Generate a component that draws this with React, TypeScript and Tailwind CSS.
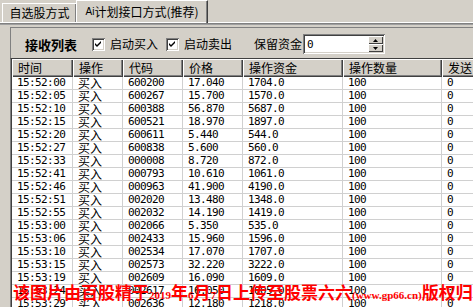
import React from "react";

const rows: [string, string, string, string, string][] = [
  ["15:52:00", "600200", "17.040", "1704.0", "100"],
  ["15:52:05", "600267", "15.700", "1570.0", "100"],
  ["15:52:10", "600388", "56.870", "5687.0", "100"],
  ["15:52:15", "600521", "18.970", "1897.0", "100"],
  ["15:52:20", "600611", "5.440", "544.0", "100"],
  ["15:52:27", "600838", "5.600", "560.0", "100"],
  ["15:52:33", "000008", "8.720", "872.0", "100"],
  ["15:52:41", "000793", "10.610", "1061.0", "100"],
  ["15:52:46", "000963", "41.900", "4190.0", "100"],
  ["15:52:51", "002020", "13.480", "1348.0", "100"],
  ["15:52:55", "002032", "14.190", "1419.0", "100"],
  ["15:53:00", "002066", "5.350", "535.0", "100"],
  ["15:53:06", "002433", "15.960", "1596.0", "100"],
  ["15:53:10", "002534", "17.070", "1707.0", "100"],
  ["15:53:15", "002573", "32.220", "3222.0", "100"],
  ["15:53:19", "002609", "16.090", "1609.0", "100"],
  ["15:53:24", "002617", "16.050", "1605.0", "100"],
  ["15:53:29", "002636", "12.180", "1218.0", "100"],
];

const headers = ["时间", "操作", "代码", "价格", "操作资金", "操作数量", "发送"];

const cjk = "font-['Noto_Sans_CJK_SC',sans-serif]";
const mono = "font-['DejaVu_Sans_Mono',monospace] text-[11px] tracking-[-0.6px]";

function CheckBox() {
  return (
    <div className="flex h-[13px] w-[13px] items-center justify-center bg-white shadow-[inset_1px_1px_0_#808080,inset_-1px_-1px_0_#ffffff,inset_2px_2px_0_#404040,inset_-2px_-2px_0_#d4d0c8]">
      <svg width="7" height="7" viewBox="0 0 7 7">
        <path d="M0 2 L2 4 L6 0 L6 2 L2 6 L0 4 Z" fill="#000" />
      </svg>
    </div>
  );
}

export default function App() {
  return (
    <div className={`relative h-[307px] w-[473px] overflow-hidden bg-[#d4d0c8] text-black ${cjk}`}>
      {/* tabs */}
      <div className="flex h-[22px] items-end pl-[2px]">
        <div className="flex h-[19px] w-[74px] items-center justify-center border-l border-t border-white text-[12px] leading-none shadow-[inset_-1px_0_0_#808080]">
          自选股方式
        </div>
        <div className="relative z-10 -mb-px flex h-[23px] w-[132px] items-center justify-center border-l border-t border-white border-r border-r-[#404040] text-[12px] leading-none shadow-[inset_-1px_0_0_#808080]">
          <span className="font-['Liberation_Sans',sans-serif] text-[10px]">Ai</span>计划接口方式(推荐)
        </div>
      </div>
      <div className="h-px bg-white" />
      <div className="h-px bg-[#808080]" />
      <div className="h-px bg-[#a0a0a0]" />

      <div className="pl-[10px] pt-[2px]">
        {/* toolbar */}
        <div className="flex h-[31px] items-center border-l border-t border-[#808080] pt-[2px]">
          <span className="ml-[14px] text-[13px] font-bold leading-none">接收列表</span>
          <div className="ml-[15px]">
            <CheckBox />
          </div>
          <span className="ml-[5px] text-[12px] leading-none">启动买入</span>
          <div className="ml-[8px]">
            <CheckBox />
          </div>
          <span className="ml-[5px] text-[12px] leading-none">启动卖出</span>
          <span className="ml-[22px] text-[12px] leading-none">保留资金</span>
          <div className="ml-[1px] flex h-[20px] w-[82px] items-center justify-between bg-white pl-[4px] pr-[2px] shadow-[inset_1px_1px_0_#808080,inset_-1px_-1px_0_#ffffff,inset_2px_2px_0_#404040,inset_-2px_-2px_0_#d4d0c8]">
            <span className={`${mono} leading-none`}>0</span>
            <div className="flex h-[16px] w-[15px] flex-col">
              <div className="flex h-[8px] items-center justify-center bg-[#d4d0c8] shadow-[inset_1px_1px_0_#ffffff,inset_-1px_-1px_0_#404040]">
                <svg width="5" height="3" viewBox="0 0 5 3"><path d="M2.5 0 L5 3 L0 3 Z" fill="#000" /></svg>
              </div>
              <div className="flex h-[8px] items-center justify-center bg-[#d4d0c8] shadow-[inset_1px_1px_0_#ffffff,inset_-1px_-1px_0_#404040]">
                <svg width="5" height="3" viewBox="0 0 5 3"><path d="M0 0 L5 0 L2.5 3 Z" fill="#000" /></svg>
              </div>
            </div>
          </div>
        </div>

        {/* table */}
        <div className="border-l border-t border-l-[#808080] border-t-[#404040]">
          <div className="border-l border-[#404040] bg-white">
            <div className="grid grid-cols-[61px_50px_60px_60px_100px_99px_80px]">
              {headers.map((h) => (
                <div
                  key={h}
                  className="flex h-[18px] items-center bg-[#d4d0c8] pl-[6px] text-[12px] leading-none shadow-[inset_1px_1px_0_#ffffff,inset_-1px_-1px_0_#404040,inset_-2px_-2px_0_#808080]"
                >
                  {h}
                </div>
              ))}
              {rows.map((r) =>
                [r[0], "买入", r[1], r[2], r[3], r[4], "0"].map((v, i) => (
                  <div
                    key={r[0] + i}
                    className={`flex h-[13px] items-center whitespace-nowrap border-b border-r border-[#d0d0d0] pl-[5px] ${
                      i === 1 ? "text-[12px] leading-[12px]" : `${mono} leading-[12px]`
                    }`}
                  >
                    {v}
                  </div>
                ))
              )}
            </div>
          </div>
        </div>
      </div>

      {/* watermark */}
      <div className="absolute left-[13px] top-[283px] whitespace-nowrap text-[17px] font-bold leading-[18px] text-[#ff0000]">
        该图片由百股精于
        <span className="font-['Liberation_Serif',serif] text-[11px]">2019</span>年
        <span className="font-['Liberation_Serif',serif] text-[11px]">6</span>月
        <span className="font-['Liberation_Serif',serif] text-[11px]">7</span>日上传至股票六六
        <span className="font-['Liberation_Serif',serif] text-[11px]">(www.gp66.cn)</span>版权归
      </div>
    </div>
  );
}
